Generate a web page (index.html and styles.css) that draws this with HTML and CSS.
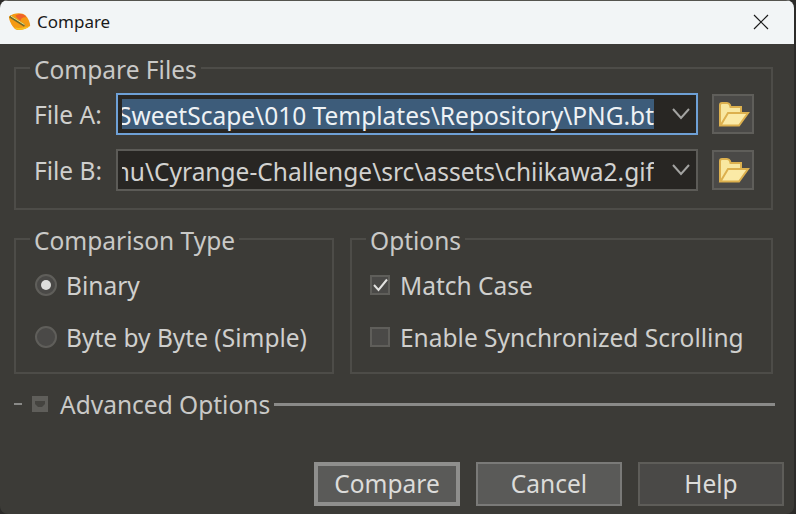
FILE: index.html
```html
<!DOCTYPE html>
<html lang="en">
<head>
  <meta charset="UTF-8" />
  <title>Compare</title>
  <link rel="stylesheet" href="styles.css">
</head>
<body>
  <div class="window">
    <header class="titlebar">
      <svg class="app-logo" width="24" height="20" viewBox="0 0 26 20">
        <path d="M1 4 C6 0 15 -1 19 3 C22 6 24 11 24 14 C18 19 10 20 7 17 C4 14 1 8 1 4Z" fill="#f59a12"/>
        <path d="M8 3 C13 0 18 1 20 5 C17 4 13 6 14 9 C11 7 9 5 8 3Z" fill="#f0622a"/>
        <path d="M7 16 C12 17 19 16 24 14 C19 19 10 20 7 16Z" fill="#f7c21e"/>
        <path d="M2 4 L18 14" stroke="#6f6a2a" stroke-width="2.4"/>
        <path d="M3 3.6 L18 13" stroke="#f2ec8a" stroke-width="1"/>
      </svg>
      <span class="title">Compare</span>
      <svg class="close-icon" width="16" height="16" viewBox="0 0 16 16">
        <path d="M1 1 L15 15 M15 1 L1 15" stroke="#1a1a1a" stroke-width="1.2" fill="none"/>
      </svg>
    </header>

    <main class="content">
      <fieldset class="group files-group">
        <legend>Compare Files</legend>
        <div class="file-row">
          <span class="file-label">File A:</span>
          <div class="combo focused">
            <div class="combo-text"><span class="selected">SweetScape\010 Templates\Repository\PNG.bt</span></div>
            <svg class="chevron" width="18" height="12" viewBox="0 0 18 12"><path d="M1 1 L9 10 L17 1" stroke="#a3a3a1" stroke-width="2" fill="none"/></svg>
          </div>
          <button class="folder-btn" type="button">
            <svg width="32" height="26" viewBox="0 0 32 26">
              <path d="M2 24 V4 Q2 2 4 2 H9 Q11 2 12 4 L12.500 6 H23 V12 H12 L5 24Z" fill="#f8e7a0" stroke="#dcb04e" stroke-width="2"/>
              <path d="M2.500 24.500 L10 12 H30 L21 24.500Z" fill="#fbeaa6" stroke="#dcb04e" stroke-width="2"/>
            </svg>
          </button>
        </div>
        <div class="file-row">
          <span class="file-label">File B:</span>
          <div class="combo">
            <div class="combo-text"><span>hu\Cyrange-Challenge\src\assets\chiikawa2.gif</span></div>
            <svg class="chevron" width="18" height="12" viewBox="0 0 18 12"><path d="M1 1 L9 10 L17 1" stroke="#a3a3a1" stroke-width="2" fill="none"/></svg>
          </div>
          <button class="folder-btn" type="button">
            <svg width="32" height="26" viewBox="0 0 32 26">
              <path d="M2 24 V4 Q2 2 4 2 H9 Q11 2 12 4 L12.500 6 H23 V12 H12 L5 24Z" fill="#f8e7a0" stroke="#dcb04e" stroke-width="2"/>
              <path d="M2.500 24.500 L10 12 H30 L21 24.500Z" fill="#fbeaa6" stroke="#dcb04e" stroke-width="2"/>
            </svg>
          </button>
        </div>
      </fieldset>

      <div class="group-row">
        <fieldset class="group type-group">
          <legend>Comparison Type</legend>
          <label class="choice"><span class="radio checked"></span>Binary</label>
          <label class="choice"><span class="radio"></span>Byte by Byte (Simple)</label>
        </fieldset>
        <fieldset class="group options-group">
          <legend>Options</legend>
          <label class="choice">
            <span class="checkbox">
              <svg width="16" height="16" viewBox="0 0 16 16"><path d="M2 8 L6.500 13 L15 2.500" stroke="#e2e2e0" stroke-width="2" fill="none"/></svg>
            </span>Match Case
          </label>
          <label class="choice"><span class="checkbox"></span>Enable Synchronized Scrolling</label>
        </fieldset>
      </div>

      <div class="advanced">
        <span class="dash"></span>
        <span class="expander">
          <svg width="16" height="16" viewBox="0 0 16 16"><path d="M3 5 H13 V8 L10 11 H6 L3 8Z" fill="#454440"/></svg>
        </span>
        <span class="advanced-label">Advanced Options</span>
        <span class="advanced-line"></span>
      </div>

      <div class="actions">
        <button class="btn default" type="button">Compare</button>
        <button class="btn hover" type="button">Cancel</button>
        <button class="btn" type="button">Help</button>
      </div>
    </main>
  </div>
</body>
</html>
```

FILE: styles.css
```css
* {
  box-sizing: border-box;
}

html, body {
  height: 100%;
  margin: 0;
  background: #2c2b29;
  overflow: hidden;
}

body {
  font-family: "Noto Sans", "Open Sans", Arial, sans-serif;
  font-size: 24.5px;
  color: #cfcfcd;
}

.window {
  width: 794px;
  height: 514px;
  display: flex;
  flex-direction: column;
  background: #3c3b37;
  border-radius: 8px 8px 8px 8px;
  overflow: hidden;
}

.titlebar {
  height: 44px;
  flex-shrink: 0;
  display: flex;
  align-items: center;
  gap: 5px;
  padding: 0 25px 2px 8px;
  background: #f2f5f6;
  border-top: 1px solid #55544f;
  color: #1a1a1a;
  font-size: 17px;
}

.title {
  flex: 1;
}

.content {
  flex: 1;
  display: flex;
  flex-direction: column;
  padding: 7px 21px 8px 14px;
}

.group {
  margin: 0;
  padding: 0;
  min-width: 0;
  border: 2px solid #4d4c48;
}

/* extra top padding drops the text below the fieldset's top border */
.group legend {
  margin-left: -4px;
  padding: 4px 4px 0;
  line-height: 30px;
  color: #c9c9c7;
}

.files-group {
  height: 159px;
  width: 759px;
  display: flex;
  flex-direction: column;
  gap: 14px;
  padding: 8px 18px 0 18px;
}

.file-row {
  display: flex;
  align-items: center;
  height: 42px;
}

.file-label {
  width: 82px;
  flex-shrink: 0;
}

.combo {
  width: 582px;
  height: 42px;
  flex-shrink: 0;
  display: flex;
  align-items: center;
  padding: 4px 0 4px 4px;
  background: #282623;
  border: 2px solid #5c5b57;
}

.combo.focused {
  border-color: #6ea0d6;
}

/* taller than the selection so descenders don't get clipped */
.combo-text {
  width: 532px;
  height: 34px;
  align-self: flex-start;
  display: flex;
  justify-content: flex-end;
  align-items: flex-start;
  overflow: hidden;
  white-space: nowrap;
  line-height: 33px;
  flex-shrink: 0;
  color: #d2d2d0;
}

.selected {
  height: 30px;
  background: #3d5c7a;
  color: #eef2f5;
}

.chevron {
  margin-left: 18px;
}

.folder-btn {
  width: 42px;
  height: 40px;
  margin-left: 14px;
  flex-shrink: 0;
  padding: 0 0 0 1px;
  display: flex;
  align-items: center;
  justify-content: center;
  background: #4a4947;
  border: 2px solid #5f5e5a;
}

.group-row {
  display: flex;
  gap: 16px;
  margin-top: 12px;
  width: 759px;
}

.type-group,
.options-group {
  height: 152px;
  display: flex;
  flex-direction: column;
  gap: 22px;
  padding: 14px 18px 0 18px;
}

.type-group {
  width: 320px;
}

.options-group {
  width: 423px;
}

.choice {
  display: flex;
  align-items: center;
  height: 30px;
  gap: 10px;
}

.radio {
  width: 22px;
  height: 22px;
  flex-shrink: 0;
  margin-left: 1px;
  margin-right: -1px;
  border-radius: 50%;
  background: #4a4947;
  border: 2px solid #5f5e5a;
  display: flex;
  align-items: center;
  justify-content: center;
}

.radio.checked::after {
  content: "";
  width: 10px;
  height: 10px;
  border-radius: 50%;
  background: #dededc;
}

.checkbox {
  width: 20px;
  height: 20px;
  flex-shrink: 0;
  background: #4a4947;
  border: 2px solid #5f5e5a;
  display: flex;
  align-items: center;
  justify-content: center;
}

.advanced {
  display: flex;
  align-items: center;
  height: 30px;
  margin-top: 15px;
  margin-right: -2px;
}

.dash {
  width: 8px;
  height: 2px;
  background: #8a8a88;
}

.expander {
  width: 16px;
  height: 16px;
  margin-left: 10px;
  display: flex;
  background: #5f5e5a;
}

.advanced-label {
  margin-left: 12px;
  color: #c9c9c7;
}

.advanced-line {
  flex: 1;
  height: 3px;
  margin-left: 4px;
  background: #8a8a88;
}

.actions {
  display: flex;
  justify-content: flex-end;
  gap: 16px;
  margin-top: auto;
  margin-right: -11px;
}

.btn {
  width: 146px;
  height: 44px;
  padding: 0 0 2px;
  font: inherit;
  color: #dcdcda;
  background: #4a4947;
  border: 2px solid #5e5d59;
}

.btn.hover {
  background: #5a5a58;
  border-color: #7a7a78;
}

.btn.default {
  background: #5a5a58;
  border: 4px solid #8f8f8d;
}
```
